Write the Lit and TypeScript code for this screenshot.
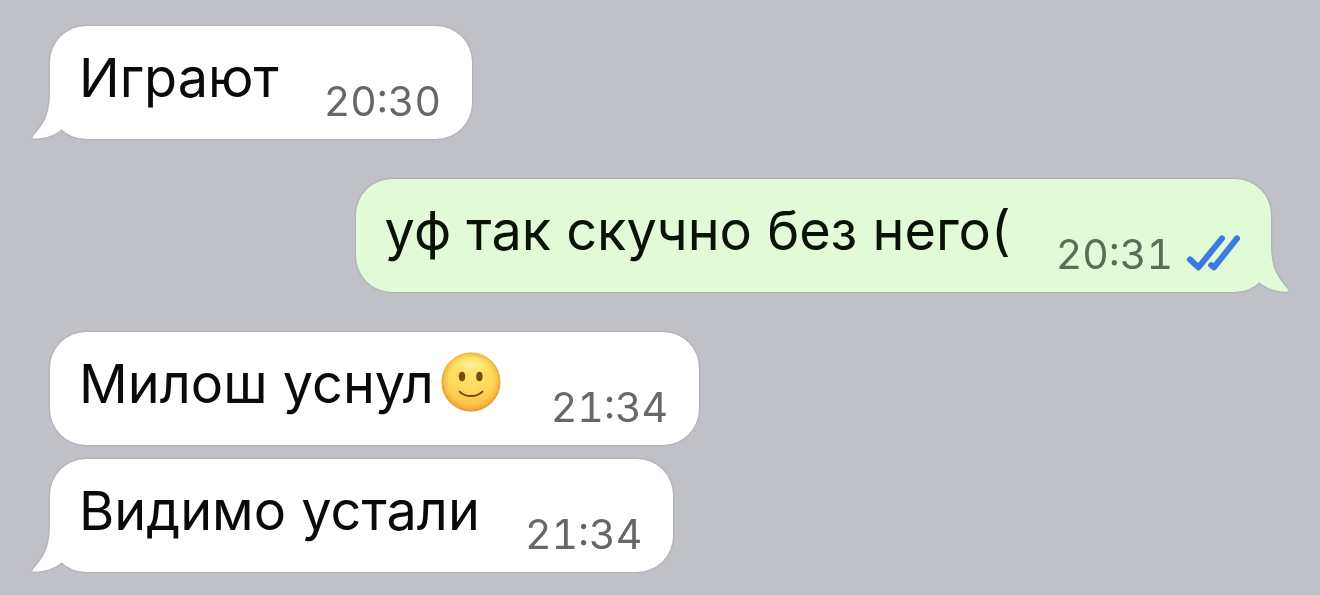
import { LitElement, html, css, svg, nothing } from "lit";
import { customElement, property } from "lit/decorators.js";

interface Message {
  text: string;
  time: string;
  own?: boolean;
  smile?: boolean;
  tail?: boolean;
  grouped?: boolean;
}

const MESSAGES: Message[] = [
  { text: "Играют", time: "20:30", tail: true },
  { text: "уф так скучно без него(", time: "20:31", own: true, tail: true },
  { text: "Милош уснул", time: "21:34", smile: true },
  { text: "Видимо устали", time: "21:34", tail: true, grouped: true },
];

@customElement("chat-smile")
class ChatSmile extends LitElement {
  static styles = css`
    :host {
      display: inline-block;
      width: 60px;
      height: 60px;
    }
    svg {
      display: block;
    }
  `;

  render() {
    return html`<svg viewBox="0 0 60 60" width="60" height="60" role="img" aria-label="🙂">
      <defs>
        <linearGradient id="skin" x1="0" y1="0" x2="0" y2="1">
          <stop offset="0" stop-color="#fde56c" />
          <stop offset="0.5" stop-color="#fdd757" />
          <stop offset="1" stop-color="#f9b544" />
        </linearGradient>
        <radialGradient id="rim" cx="0.5" cy="0.49" r="0.52">
          <stop offset="0" stop-color="#ffee7c" stop-opacity="0.55" />
          <stop offset="0.68" stop-color="#ffdf62" stop-opacity="0.2" />
          <stop offset="0.87" stop-color="#f3a936" stop-opacity="0.5" />
          <stop offset="1" stop-color="#df8626" stop-opacity="0.9" />
        </radialGradient>
        <radialGradient id="shine" cx="0.5" cy="0.5" r="0.5">
          <stop offset="0" stop-color="#fffbb8" stop-opacity="0.7" />
          <stop offset="1" stop-color="#fff08a" stop-opacity="0" />
        </radialGradient>
      </defs>
      <circle cx="30" cy="30" r="29.5" fill="url(#skin)" />
      <circle cx="30" cy="30" r="29.5" fill="url(#rim)" />
      <ellipse cx="30" cy="13" rx="21" ry="10" fill="url(#shine)" />
      <ellipse cx="21" cy="24.5" rx="3.2" ry="4.8" fill="#7b4a12" />
      <ellipse cx="38.4" cy="24.5" rx="3.2" ry="4.8" fill="#7b4a12" />
      <path d="M18.6 39.6C24.5 45.6 35.5 45.6 41.4 39.6" fill="none" stroke="#744510" stroke-width="2" stroke-linecap="round" />
    </svg>`;
  }
}

@customElement("chat-bubble")
class ChatBubble extends LitElement {
  @property({ attribute: false }) message!: Message;

  static styles = css`
    :host {
      display: block;
      max-width: 100%;
    }
    .bubble {
      position: relative;
      display: flex;
      justify-content: space-between;
      gap: 45px;
      padding: 18px 31px 13px 29px;
      border-radius: 36px;
      background: #ffffff;
      color: #0a0a0a;
      filter: drop-shadow(0 0 1px rgba(60, 60, 70, 0.35));
    }
    .own {
      background: #e0fbd6;
      color: #0a1208;
    }
    .text {
      display: flex;
      align-items: center;
      margin: 0 0 14px;
      font-size: 54px;
      line-height: 68px;
    }
    .smile {
      margin: 0 5px 4px 7px;
    }
    .meta {
      display: flex;
      align-items: center;
      align-self: flex-end;
      gap: 13px;
      color: #676767;
      font-size: 41px;
      font-variant-numeric: tabular-nums;
      line-height: 50px;
    }
    .own .meta {
      color: #5b6d55;
    }
    .checks {
      display: block;
    }
    .tail {
      position: absolute;
      left: -19px;
      bottom: 0;
      fill: #ffffff;
    }
    .own .tail {
      left: auto;
      right: -19px;
      transform: scaleX(-1);
      fill: #e0fbd6;
    }
  `;

  render() {
    const m = this.message;
    return html`<article class="bubble ${m.own ? "own" : ""}">
      ${m.tail
        ? html`<svg class="tail" width="56" height="76" viewBox="0 0 56 76" aria-hidden="true">
            <path d="M19 0V26C19 52 13.5 60 1.8 73.5Q0.8 75.3 2.5 75.6C13 76 23 73 30.5 66.5L46 50V0Z" />
          </svg>`
        : nothing}
      <p class="text"><span>${m.text}</span>${m.smile ? html`<chat-smile class="smile"></chat-smile>` : nothing}</p>
      <span class="meta">
        <time datetime=${m.time}>${m.time}</time>
        ${m.own
          ? html`<svg class="checks" width="54" height="38" viewBox="0 0 54 38" role="img" aria-label="Прочитано">
              ${svg`<g fill="none" stroke="#3b7ae0" stroke-width="6" stroke-linecap="round" stroke-linejoin="round">
                <path d="M4 24.5L12.4 32.4L36 3.4" />
                <path d="M25.2 30.2L28 32.4L51 3.4" />
              </g>`}
            </svg>`
          : nothing}
      </span>
    </article>`;
  }
}

@customElement("app-root")
class AppRoot extends LitElement {
  static styles = css`
    :host {
      display: block;
      box-sizing: border-box;
      min-height: 100vh;
      padding: 26px 49px 22px 50px;
      background: #c0c1c6;
      font-family: Inter, "Liberation Sans", sans-serif;
    }
    .log {
      display: flex;
      flex-direction: column;
      align-items: flex-start;
      gap: 40px;
      margin: 0;
      padding: 0;
      list-style: none;
    }
    .own {
      align-self: flex-end;
    }
    .grouped {
      margin-top: -26px;
    }
  `;

  render() {
    return html`<ol class="log">
      ${MESSAGES.map(
        (m) => html`<li class="${m.own ? "own" : ""} ${m.grouped ? "grouped" : ""}">
          <chat-bubble .message=${m}></chat-bubble>
        </li>`
      )}
    </ol>`;
  }
}
